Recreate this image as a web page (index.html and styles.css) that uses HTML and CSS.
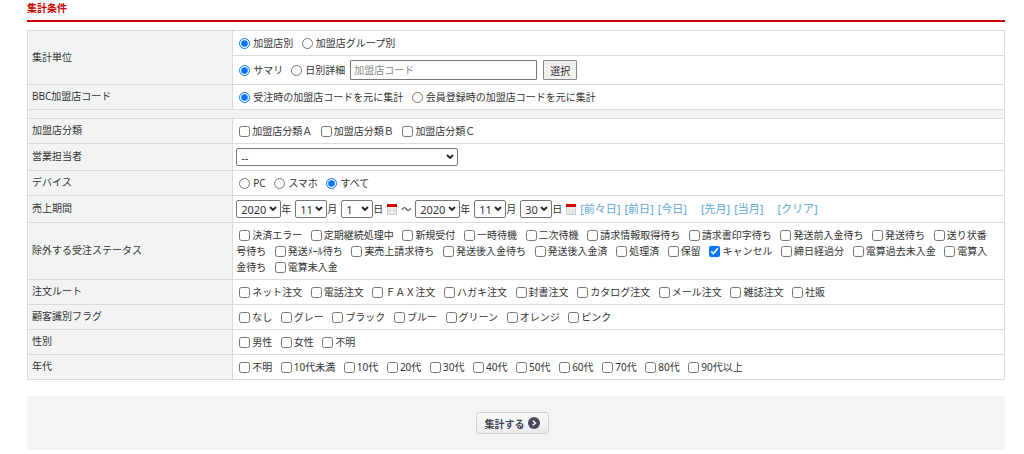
FILE: index.html
```
<!DOCTYPE html>
<html lang="ja">
  <head>
    <meta charset="UTF-8" />
    <meta name="viewport" content="width=device-width, initial-scale=1.0" />
    <title>集計条件</title>
    <link rel="stylesheet" href="styles.css">
  </head>
  <body>
    <h2>集計条件</h2>
    <form>
      <table>
        <tbody>
          <tr>
            <th rowspan="2">集計単位</th>
            <td>
              <label><input type="radio" name="unit" checked>加盟店別</label>
              <label><input type="radio" name="unit">加盟店グループ別</label>
            </td>
          </tr>
          <tr>
            <td>
              <div class="line">
                <label><input type="radio" name="detail" checked>サマリ</label>
                <label><input type="radio" name="detail">日別詳細</label>
                <input type="text" class="code" placeholder="加盟店コード" aria-label="加盟店コード">
                <button type="button" class="pick">選択</button>
              </div>
            </td>
          </tr>
          <tr>
            <th>BBC加盟店コード</th>
            <td>
              <label><input type="radio" name="bbc" checked>受注時の加盟店コードを元に集計</label>
              <label><input type="radio" name="bbc">会員登録時の加盟店コードを元に集計</label>
            </td>
          </tr>
          <tr>
            <td colspan="2" class="spacer"></td>
          </tr>
          <tr>
            <th>加盟店分類</th>
            <td>
              <label><input type="checkbox">加盟店分類Ａ</label>
              <label><input type="checkbox">加盟店分類Ｂ</label>
              <label><input type="checkbox">加盟店分類Ｃ</label>
            </td>
          </tr>
          <tr>
            <th><label for="staff">営業担当者</label></th>
            <td>
              <div class="line">
                <select id="staff" class="staff"><option>--</option></select>
              </div>
            </td>
          </tr>
          <tr>
            <th>デバイス</th>
            <td>
              <label><input type="radio" name="device">PC</label>
              <label><input type="radio" name="device">スマホ</label>
              <label><input type="radio" name="device" checked>すべて</label>
            </td>
          </tr>
          <tr>
            <th>売上期間</th>
            <td>
              <div class="dates">
                <label><select class="year"><option>2020</option></select>年</label>
                <label><select><option>11</option></select>月</label>
                <label><select><option>1</option></select>日</label>
                <svg class="cal" viewBox="0 0 10 11"><path fill="#c9cdcd" d="M0 0h10v11H0z"/><path fill="#eceeee" d="M1 3h8v7H1z"/><path stroke="#dcdfdf" d="M3.5 3v7M6.5 3v7M1 6.5h8"/><path fill="#d90000" d="M0 0h10v3H0z"/></svg>
                <span>～</span>
                <label><select class="year"><option>2020</option></select>年</label>
                <label><select><option>11</option></select>月</label>
                <label><select><option>30</option></select>日</label>
                <svg class="cal" viewBox="0 0 10 11"><path fill="#c9cdcd" d="M0 0h10v11H0z"/><path fill="#eceeee" d="M1 3h8v7H1z"/><path stroke="#dcdfdf" d="M3.5 3v7M6.5 3v7M1 6.5h8"/><path fill="#d90000" d="M0 0h10v3H0z"/></svg>
                <a href="#">[前々日]</a>
                <a href="#">[前日]</a>
                <a href="#">[今日]</a>
                <a href="#" class="apart">[先月]</a>
                <a href="#">[当月]</a>
                <a href="#" class="apart">[クリア]</a>
              </div>
            </td>
          </tr>
          <tr>
            <th>除外する受注ステータス</th>
            <td>
              <label><input type="checkbox">決済エラー</label>
              <label><input type="checkbox">定期継続処理中</label>
              <label><input type="checkbox">新規受付</label>
              <label><input type="checkbox">一時待機</label>
              <label><input type="checkbox">二次待機</label>
              <label><input type="checkbox">請求情報取得待ち</label>
              <label><input type="checkbox">請求書印字待ち</label>
              <label><input type="checkbox">発送前入金待ち</label>
              <label><input type="checkbox">発送待ち</label>
              <label><input type="checkbox">送り状番号待ち</label>
              <label><input type="checkbox">発送ﾒｰﾙ待ち</label>
              <label><input type="checkbox">実売上請求待ち</label>
              <label><input type="checkbox">発送後入金待ち</label>
              <label><input type="checkbox">発送後入金済</label>
              <label><input type="checkbox">処理済</label>
              <label><input type="checkbox">保留</label>
              <label><input type="checkbox" checked>キャンセル</label>
              <label><input type="checkbox">締日経過分</label>
              <label><input type="checkbox">電算過去未入金</label>
              <label><input type="checkbox">電算入金待ち</label>
              <label><input type="checkbox">電算未入金</label>
            </td>
          </tr>
          <tr>
            <th>注文ルート</th>
            <td>
              <label><input type="checkbox">ネット注文</label>
              <label><input type="checkbox">電話注文</label>
              <label><input type="checkbox">ＦＡＸ注文</label>
              <label><input type="checkbox">ハガキ注文</label>
              <label><input type="checkbox">封書注文</label>
              <label><input type="checkbox">カタログ注文</label>
              <label><input type="checkbox">メール注文</label>
              <label><input type="checkbox">雑誌注文</label>
              <label><input type="checkbox">社販</label>
            </td>
          </tr>
          <tr>
            <th>顧客識別フラグ</th>
            <td>
              <label><input type="checkbox">なし</label>
              <label><input type="checkbox">グレー</label>
              <label><input type="checkbox">ブラック</label>
              <label><input type="checkbox">ブルー</label>
              <label><input type="checkbox">グリーン</label>
              <label><input type="checkbox">オレンジ</label>
              <label><input type="checkbox">ピンク</label>
            </td>
          </tr>
          <tr>
            <th>性別</th>
            <td>
              <label><input type="checkbox">男性</label>
              <label><input type="checkbox">女性</label>
              <label><input type="checkbox">不明</label>
            </td>
          </tr>
          <tr>
            <th>年代</th>
            <td>
              <label><input type="checkbox">不明</label>
              <label><input type="checkbox">10代未満</label>
              <label><input type="checkbox">10代</label>
              <label><input type="checkbox">20代</label>
              <label><input type="checkbox">30代</label>
              <label><input type="checkbox">40代</label>
              <label><input type="checkbox">50代</label>
              <label><input type="checkbox">60代</label>
              <label><input type="checkbox">70代</label>
              <label><input type="checkbox">80代</label>
              <label><input type="checkbox">90代以上</label>
            </td>
          </tr>
        </tbody>
      </table>
      <div class="actions">
        <button type="button" class="submit">
          集計する
          <svg viewBox="0 0 12 12"><circle cx="6" cy="6" r="6" fill="#4a4a5a"/><path d="M4.8 3.6L7.4 6L4.8 8.4" fill="none" stroke="#e8e8f0" stroke-width="1.6"/></svg>
        </button>
      </div>
    </form>
  </body>
</html>
```
FILE: styles.css
```
* {
  box-sizing: border-box;
}
body {
  margin: 0 19px 0 27px;
  font-family: "Noto Sans", "Noto Sans CJK JP", sans-serif;
  font-size: 10px;
  line-height: 16px;
  color: #333;
  background: #fff;
}
h2 {
  margin: 0 0 8px;
  padding-bottom: 4px;
  border-bottom: 2px solid #c00;
  font-size: 10px;
  color: #c00;
}
table {
  width: 100%;
  border-collapse: collapse;
}
th,
td {
  border: 1px solid #d9dcdc;
  padding: 4px 12px 4px 3px;
  text-align: left;
}
th {
  width: 21%;
  padding: 3px 4px 5px;
  background: #f2f4f4;
  font-weight: normal;
}
.spacer {
  height: 9px;
  padding: 0;
  background: #f2f4f4;
}
td label {
  margin-right: 3px;
}
input,
select,
button {
  font-family: inherit;
  color: #333;
}
input[type="radio"],
input[type="checkbox"] {
  width: 11px;
  height: 11px;
  margin: 0 2px 2px 3px;
  vertical-align: middle;
}
input[type="radio"] {
  margin-right: 3px;
}
.line,
.dates {
  display: flex;
  align-items: center;
}
.line label {
  margin-right: 5px;
}
.code {
  width: 187px;
  height: 20px;
  margin-right: 6px;
  padding: 0 3px;
  border: 1px solid #767676;
  border-radius: 1px;
  font-size: 10px;
}
.code::placeholder {
  color: #888;
}
.pick {
  height: 20px;
  padding: 0 6px;
  border: 1px solid #8a8a8a;
  border-radius: 1px;
  background: #efefef;
  font-size: 10px;
}
select {
  appearance: none;
  width: 32px;
  height: 18px;
  padding: 0 0 0 4px;
  border: 1px solid #767676;
  border-radius: 2px;
  background: #fff url("data:image/svg+xml,%3Csvg xmlns='http://www.w3.org/2000/svg' width='8' height='6'%3E%3Cpath d='M1 1l3 3 3-3' fill='none' stroke='%23222' stroke-width='1.8'/%3E%3C/svg%3E") no-repeat right 3px center;
  font-size: 11px;
}
.staff {
  width: 222px;
}
.year {
  width: 45px;
}
.dates {
  gap: 4px;
}
.dates label {
  display: flex;
  align-items: center;
  margin: 0;
}
.cal {
  width: 10px;
  height: 11px;
}
a {
  font-size: 11px;
  color: #5ba7d6;
  text-decoration: none;
}
.apart {
  margin-left: 10px;
}
.actions {
  display: flex;
  justify-content: center;
  margin-top: 16px;
  padding: 16px 24px 16px 16px;
  background: #f4f4f4;
}
.submit {
  display: flex;
  align-items: center;
  gap: 3px;
  height: 22px;
  padding: 0 8px;
  border: 1px solid #cfcfdc;
  border-radius: 3px;
  background: linear-gradient(#fafafa, #ebebee);
  font-size: 10px;
  font-weight: bold;
  color: #445;
}
.submit svg {
  width: 12px;
  height: 12px;
}
```
